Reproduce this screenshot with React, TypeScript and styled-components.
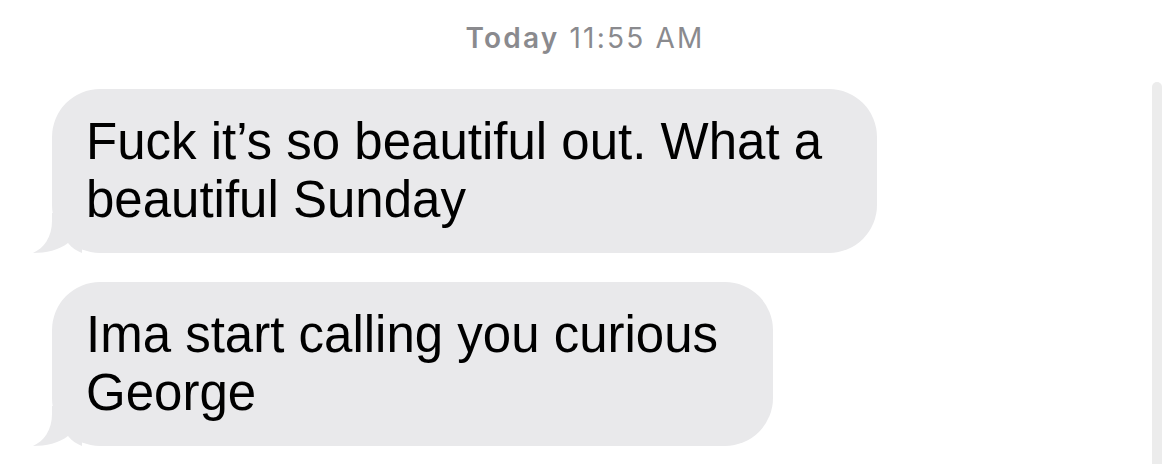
import styled, { createGlobalStyle } from 'styled-components'

const GlobalStyle = createGlobalStyle`
  html, body {
    margin: 0;
    padding: 0;
    background: #ffffff;
  }
  body {
    font-family: "Liberation Sans", Arial, sans-serif;
    -webkit-font-smoothing: antialiased;
  }
`

const Screen = styled.div`
  position: relative;
  width: 1170px;
  height: 464px;
  overflow: hidden;
  background: #ffffff;
`

const Stamp = styled.div`
  padding-top: 24px;
  text-align: center;
  font-family: Inter, "Liberation Sans", sans-serif;
  font-size: 28px;
  line-height: 28px;
  letter-spacing: 2.2px;
  color: #8a8a8e;

  b {
    font-weight: 600;
  }
`

const Thread = styled.div`
  display: flex;
  flex-direction: column;
  align-items: flex-start;
  gap: 29px;
  padding: 37px 0 0 52px;
`

const Bubble = styled.div`
  position: relative;
  padding: 24px 55px 24px 34px;
  background: #e9e9eb;
  border-radius: 48px;
  font-size: 51px;
  line-height: 58px;
  color: #000000;
  white-space: nowrap;
`

const Tail = styled.svg`
  position: absolute;
  left: -20px;
  bottom: 0;
  width: 50px;
  height: 40px;
`

const ScrollThumb = styled.div`
  position: absolute;
  left: 1152px;
  top: 82px;
  bottom: 0;
  width: 10px;
  border-radius: 5px 5px 0 0;
  background: #ececec;
`

const messages = [
  ['Fuck it’s so beautiful out. What a', 'beautiful Sunday'],
  ['Ima start calling you curious', 'George'],
]

const App = () => {
  return (
    <Screen>
      <GlobalStyle />
      <Stamp>
        <b>Today</b> 11:55 AM
      </Stamp>
      <Thread>
        {messages.map((lines, i) => (
          <Bubble key={i}>
            <Tail viewBox="0 0 50 40">
              <path
                d="M20 0 L20 8 C20 24 12 35 1 40 C14 40 27 37 36 30 C40 35 45 38 50 40 L50 0 Z"
                fill="#e9e9eb"
              />
            </Tail>
            {lines.map((l, j) => (
              <div key={j}>{l}</div>
            ))}
          </Bubble>
        ))}
      </Thread>
      <ScrollThumb />
    </Screen>
  )
}

export default App
